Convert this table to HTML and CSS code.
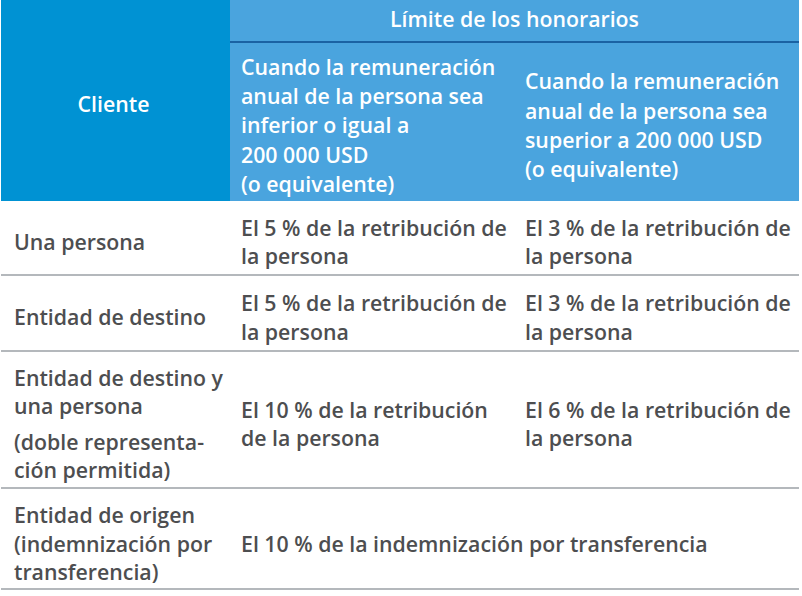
FILE: index.html
```html
<!DOCTYPE html>
<html lang="es">
<head>
<meta charset="utf-8">
<title>Límite de los honorarios</title>
<link rel="stylesheet" href="styles.css">
</head>
<body>
<table class="fees">
  <colgroup>
    <col class="c1">
    <col class="c2">
    <col class="c3">
  </colgroup>
  <thead>
    <tr class="h1">
      <th class="client" rowspan="2">Cliente</th>
      <th class="limit" colspan="2">Límite de los honorarios</th>
    </tr>
    <tr class="h2">
      <th class="sub">Cuando la remuneración<br>anual de la persona sea<br>inferior o igual a<br>200 000 USD<br>(o equivalente)</th>
      <th class="sub">Cuando la remuneración<br>anual de la persona sea<br>superior a 200 000 USD<br>(o equivalente)</th>
    </tr>
  </thead>
  <tbody>
    <tr class="r1">
      <td>Una persona</td>
      <td>El 5 % de la retribución de la persona</td>
      <td>El 3 % de la retribución de la persona</td>
    </tr>
    <tr class="r2">
      <td>Entidad de destino</td>
      <td>El 5 % de la retribución de la persona</td>
      <td>El 3 % de la retribución de la persona</td>
    </tr>
    <tr class="r3">
      <td><p class="p">Entidad de destino y<br>una persona</p><p class="p note">(doble representa-<br>ción permitida)</p></td>
      <td>El 10 % de la retribución<br>de la persona</td>
      <td>El 6 % de la retribución de la persona</td>
    </tr>
    <tr class="r4">
      <td>Entidad de origen<br>(indemnización por<br>transferencia)</td>
      <td colspan="2">El 10 % de la indemnización por transferencia</td>
    </tr>
  </tbody>
</table>
</body>
</html>
```
FILE: styles.css
```css
html, body {
  margin: 0;
  padding: 0;
  background: #ffffff;
}

body {
  font-family: "Open Sans", "Liberation Sans", sans-serif;
  font-size: 21.3px;
  font-weight: 600;
  color: #4d4e50;
}

.fees {
  margin-left: 1px;
  width: 798px;
  table-layout: fixed;
  border-collapse: separate;
  border-spacing: 0;
}

.c1 { width: 229px; }
.c2 { width: 283px; }
.c3 { width: 286px; }

.h1 { height: 43px; }
.h2 { height: 158px; }
.r1 { height: 75px; }
.r2 { height: 76px; }
.r3 { height: 137px; }
.r4 { height: 101px; }

.fees th {
  color: #ffffff;
  font-weight: 600;
  text-align: left;
  vertical-align: middle;
  padding: 0;
}

.fees th.client {
  background: #0092d3;
  text-align: center;
  padding: 6px 4px 0 0;
}

.fees th.limit {
  background: #4aa4de;
  text-align: center;
  line-height: 28px;
  border-bottom: 2px solid #1a62a3;
  padding: 0 0 4px;
}

.fees th.sub {
  background: #4aa4de;
  line-height: 29.3px;
  padding: 6px 4px 0 11px;
}

.fees th.sub + th.sub {
  padding-left: 12px;
}

.fees td {
  vertical-align: middle;
  line-height: 28.5px;
  padding: 9px 4px 0 11px;
  border-bottom: 2px solid #b4b8bc;
}

.fees td:first-child {
  padding-left: 13px;
  padding-right: 2px;
}

.fees td + td + td {
  padding-left: 12px;
}

.r4 td {
  padding-top: 11px;
}

.p {
  margin: 0;
}

.p.note {
  margin-top: 7px;
}
```
